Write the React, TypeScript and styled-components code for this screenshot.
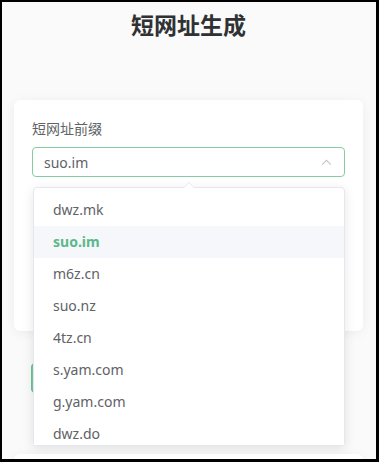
import styled, { createGlobalStyle } from 'styled-components';

const GlobalStyle = createGlobalStyle`
  html, body {
    margin: 0;
    padding: 0;
    background: #000;
  }
  * {
    box-sizing: border-box;
  }
`;

const prefixes = ['dwz.mk', 'suo.im', 'm6z.cn', 'suo.nz', '4tz.cn', 's.yam.com', 'g.yam.com', 'dwz.do'];
const selected = 'suo.im';

function App() {
  return (
    <>
      <GlobalStyle />
      <Frame>
        <Page>
          <Title>短网址生成</Title>

          <Card>
            <Label>短网址前缀</Label>
            <SelectWrap>
              <SelectBox>
                <span>{selected}</span>
                <Chevron viewBox='0 0 12 8'>
                  <path d='M1 6.5 L6 1.5 L11 6.5' />
                </Chevron>
              </SelectBox>

              <Dropdown>
                <Arrow />
                <OptionList>
                  {prefixes.map((p) => (
                    <Option key={p} active={p === selected}>
                      {p}
                    </Option>
                  ))}
                </OptionList>
              </Dropdown>
            </SelectWrap>
          </Card>

          <GenerateButton>生成</GenerateButton>

          <Card style={{ height: 120 }} />
        </Page>
      </Frame>
    </>
  );
}

export default App;

interface OptionProps {
  active?: boolean;
}

const Frame = styled.div`
  width: 379px;
  height: 462px;
  border-style: solid;
  border-color: #000;
  border-width: 2px 3px 3px 2px;
  overflow: hidden;
  background: #fafafa;
`;

const Page = styled.div`
  padding: 0 13px 0 12px;
  font-family: 'Noto Sans', 'Noto Sans CJK SC', sans-serif;
  color: #606266;
`;

const Title = styled.h1`
  margin: 0;
  padding-top: 7px;
  text-align: center;
  font-size: 23px;
  line-height: 30px;
  font-weight: 700;
  color: #303133;
  font-family: 'Noto Sans CJK SC', sans-serif;
`;

const Card = styled.div`
  margin-top: 61px;
  background: #fff;
  border-radius: 6px;
  box-shadow: 0 2px 12px 0 rgba(0, 0, 0, 0.06);
  padding: 18px 18px 0;
  height: 231px;
  position: relative;

  & + & {
    margin-top: -15px;
  }
`;

const Label = styled.div`
  font-size: 14px;
  line-height: 20px;
  color: #606266;
  margin-bottom: 9px;
  font-family: 'Noto Sans CJK SC', sans-serif;
`;

const SelectWrap = styled.div`
  position: relative;
  z-index: 5;
`;

const SelectBox = styled.div`
  height: 30px;
  border: 1px solid #86cca3;
  border-radius: 4px;
  display: flex;
  align-items: center;
  justify-content: space-between;
  padding: 0 12px 0 11px;
  font-size: 14px;
  color: #606266;
  background: #fff;
`;

const Chevron = styled.svg`
  width: 11px;
  height: 7px;
  fill: none;
  stroke: #c0c4cc;
  stroke-width: 1.2;
`;

const Dropdown = styled.div`
  position: absolute;
  top: 40px;
  left: 1px;
  right: 0;
  background: #fff;
  border: 1px solid #e4e7ed;
  border-radius: 4px;
  box-shadow: 0 3px 12px 0 rgba(0, 0, 0, 0.1);
`;

const Arrow = styled.div`
  position: absolute;
  top: -6px;
  left: 50%;
  margin-left: -6px;
  width: 0;
  height: 0;
  border-left: 6px solid transparent;
  border-right: 6px solid transparent;
  border-bottom: 6px solid #e4e7ed;

  &::after {
    content: '';
    position: absolute;
    top: 1px;
    left: -5px;
    border-left: 5px solid transparent;
    border-right: 5px solid transparent;
    border-bottom: 5px solid #fff;
  }
`;

const OptionList = styled.ul`
  list-style: none;
  margin: 0;
  padding: 6px 0 0;
  height: 257px;
  overflow: hidden;
`;

const Option = styled.li<OptionProps>`
  height: 32px;
  line-height: 32px;
  padding: 0 19px;
  font-size: 14px;
  color: ${(props) => (props.active ? '#5cb88a' : '#606266')};
  font-weight: ${(props) => (props.active ? 700 : 400)};
  background: ${(props) => (props.active ? '#f5f7fa' : '#fff')};
`;

const GenerateButton = styled.button`
  display: block;
  position: relative;
  z-index: 2;
  margin: 32px 18px 0 17px;
  width: calc(100% - 35px);
  height: 30px;
  border: 1px solid #6cc197;
  border-radius: 4px;
  background: #7ccaa2;
  color: #fff;
  font-size: 14px;
  font-family: 'Noto Sans CJK SC', sans-serif;
`;
